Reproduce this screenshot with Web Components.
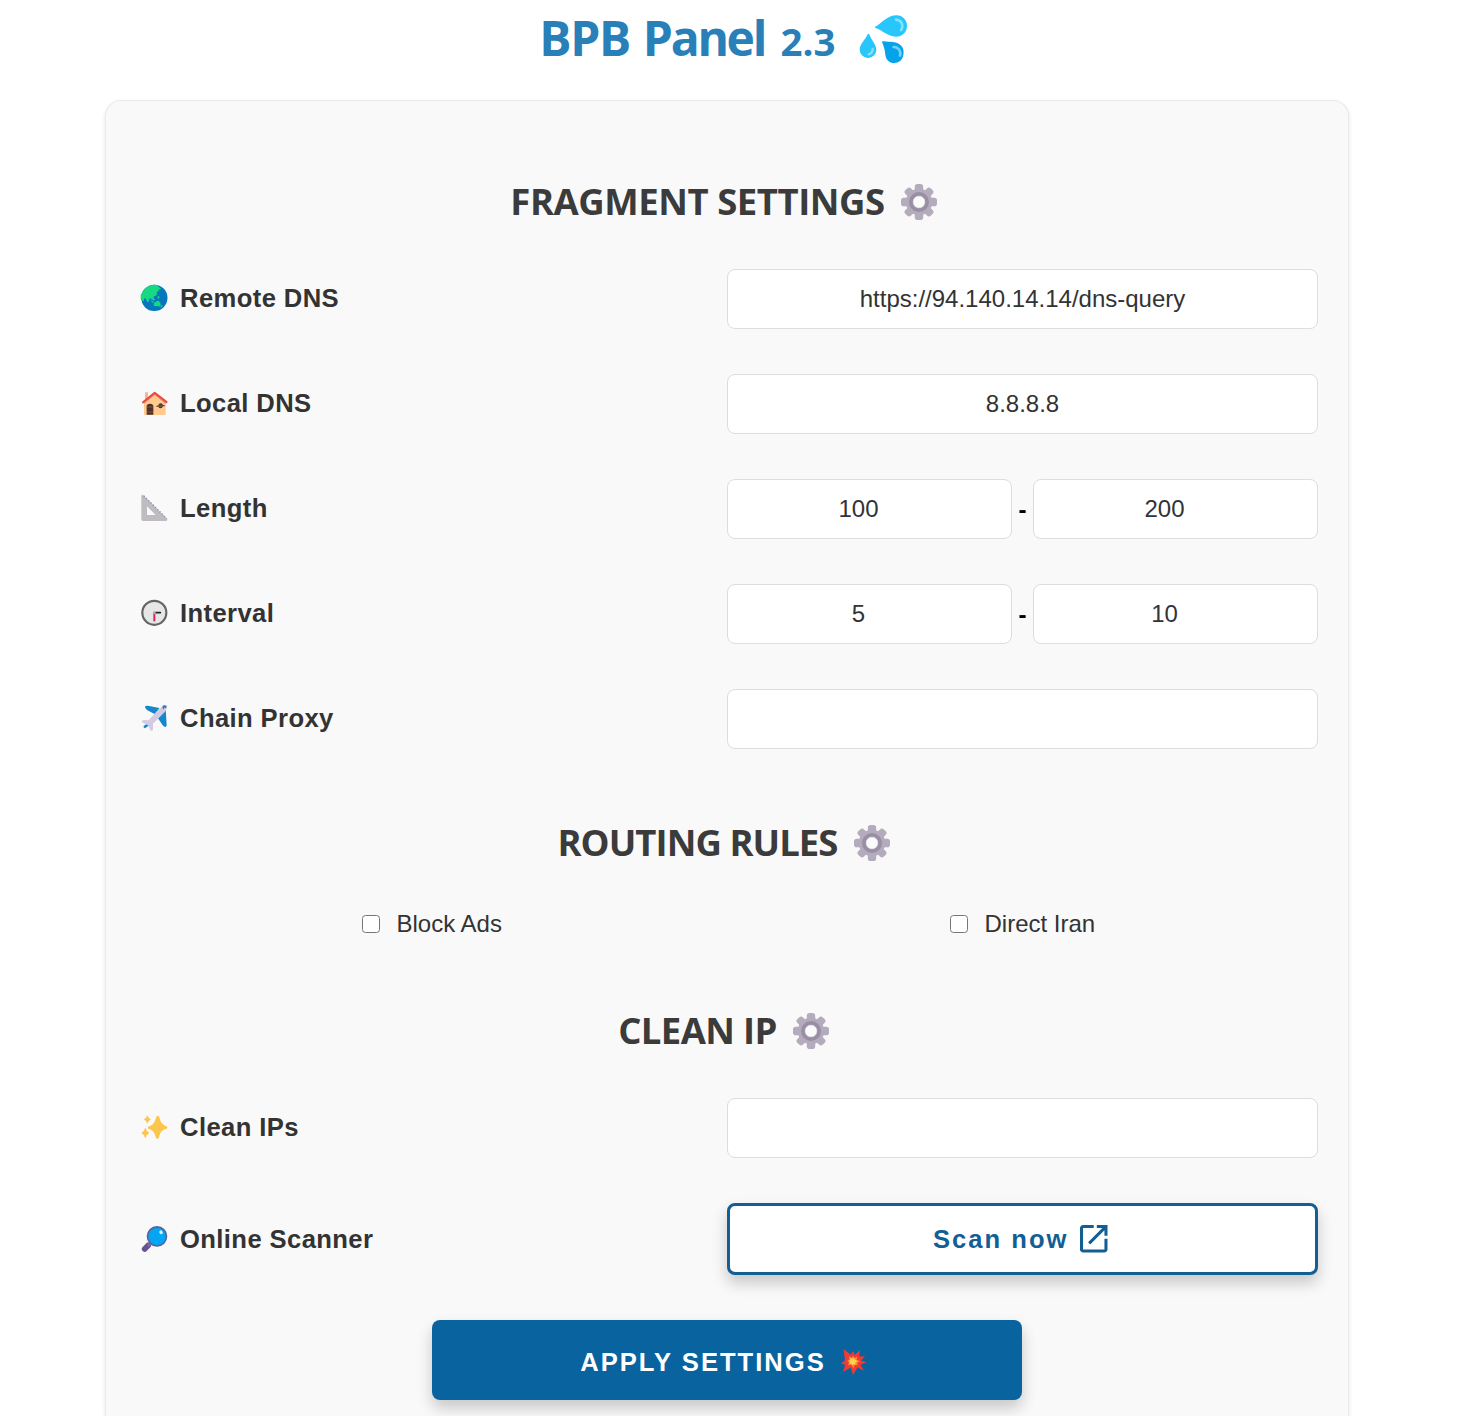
<!DOCTYPE html>
<html lang="en">
<head>
<meta charset="utf-8">
<title>BPB Panel</title>
<style>
html,body{margin:0;height:1416px;overflow:hidden;background:#fff}
body{font-family:"Liberation Sans",Arial,sans-serif;color:#333}
</style>
</head>
<body>
<bpb-panel></bpb-panel>
<script>
const ICONS = {
  drops: ['984 42 150 150', `<path fill="#27c7fc" d="M1033 80C1052 70 1068 46 1097 46a31 31 0 0 1 31 32c0 19-15 32-33 32-25 0-43-21-62-26q-4-2 0-4Z"/><path fill="none" stroke="#83e3ff" stroke-width="8" stroke-linecap="round" d="M1095 59c12 1 19 9 19 19q0 8-4 12"/><path fill="#27c7fc" d="M1010 103q2-4 5 0c5 16 21 31 21 46a25 25 0 0 1-50 0c0-16 17-30 24-46Z"/><path fill="none" stroke="#83e3ff" stroke-width="7" stroke-linecap="round" d="M1025 147c0 8-5 14-12 16"/><path fill="#06a2ea" d="M1053 126q0-3 5-2c19 3 36 0 49 10 11 8 12 20 10 31-2 15-14 24-27 24-16 0-25-10-27-25-1-13-4-24-10-38Z"/><path fill="none" stroke="#70d2fb" stroke-width="8" stroke-linecap="round" d="M1088 141c12 0 20 9 20 19q0 5-1 7"/>`],
  gear: ['0 0 36 36', `<g fill="#b4acbc"><circle cx="18" cy="18" r="13.2"/><rect x="13.8" y="0" width="8.4" height="36" rx="2.8"/><rect x="0" y="13.8" width="36" height="8.4" rx="2.8"/><g transform="rotate(45 18 18)"><rect x="14" y="0" width="8" height="36" rx="2.8"/><rect x="0" y="14" width="36" height="8" rx="2.8"/></g></g><circle cx="18" cy="18" r="8" fill="#fff" stroke="#998ea4" stroke-width="4"/><circle cx="18" cy="18" r="6" fill="#fbfbfb" stroke="#c9c3cf" stroke-width=".6"/>`],
  globe: ['30 42 84 84', `<circle cx="73" cy="83.500" r="39.500" fill="#0577bd"/><path fill="#16d981" d="M36 70C43 54 57 44 73 44q5 0 10 1l3 6 5 2 2 4-6 1-2 6-5 3 1 6-5 5-4 1-2 8-4 3-4-6-5 5-2 8-4-2-3-9-5-1-2 9-4-1-2-8-3 2q-1-8 1-16Z"/><path fill="#16d981" d="M72 98l6-2 3-4 5 1 5 5 1 7-4 5-6-2-8 1-3-5ZM67 86l4-3 4 6-3 4ZM82 81l4-4 3 5-4 4ZM62 91l7 3 3 5-6-2ZM94 105l4 3-4 5-3-2Z"/>`],
  house: ['30 357 84 84', `<path fill="#f2ba82" d="M45 367h9v15l-9 9Z"/><path fill="#ffca8c" d="M42 395l32-25 33 28v37H42Z"/><path fill="#d58d66" d="M41 402l33-27 35 28v-7L74 369l-33 28Z"/><path fill="none" stroke="#ef4545" stroke-width="6" stroke-linecap="round" stroke-linejoin="round" d="M39 397L74 368l36 28"/><path fill="#4d302c" d="M50 434v-25q0-8 10-8t10 8v25Z"/><path stroke="#956349" stroke-width="2" d="M50 411h20M51 426h18"/><path fill="#523532" d="M79 408l6-2q1-6 7-6t7 5l5 1v3h-5q-2 6-7 6t-7-5h-6Z"/><path stroke="#a9735a" stroke-width="2" d="M84 408h15"/>`],
  ruler: ['30 42 84 84', `<path fill="#bebcc1" fill-rule="evenodd" d="M34 48q0-5 6-3l70 70q4 4-1 8H38q-4 0-4-5ZM51 79v26h26Z"/><path fill="none" stroke="#8780a0" stroke-width="5" stroke-dasharray="2.500 7" d="M42 48l68 68"/>`],
  clock: ['30 357 84 84', `<circle cx="73" cy="398.500" r="36" fill="#e6e6e6" stroke="#646464" stroke-width="6.500"/><path stroke="#d02b5a" stroke-width="6" d="M73 398v26"/><path stroke="#222" stroke-width="5" stroke-linecap="round" d="M76 398h15"/><circle cx="73" cy="398" r="4.500" fill="#aaa"/>`],
  plane: ['30 672 84 84', `<path fill="#1687c8" d="M46 678l8-1 34 7-10 20-26-13q-9-8-6-13ZM92 698l15-10 3 48q-2 10-12 0L82 712ZM41 738l13-9 5 6-14 10q-6-1-4-7Z"/><path fill="#d5cae3" d="M112 675c0 11-5 20-13 26l-30 30v19q-5 5-9 0l-4-13-21-11q1-6 8-6l13 1 27-30c8-9 19-16 29-16Z"/><path fill="#2381b8" d="M97 680q2-5 8-4 6 2 4 8l-6-1-3 6Z"/>`],
  sparkles: ['30 39 84 84', `<g fill="#fcc64b"><path d="M83 47q4-1 6 8 4 18 17 22 8 3 6 7-1 2-8 4-12 4-16 20-2 10-6 9-4 0-6-9-4-16-16-20-7-2-7-5t7-5q13-5 17-22 2-9 6-9Z"/><path d="M52 47q2 0 4 7 6 2 6 4t-6 5q-2 7-4 7t-4-7q-6-3-6-5t6-4q2-7 4-7ZM46 84q3 0 4 9 7 3 7 6t-7 6q-2 9-4 9t-4-9q-7-3-7-6t7-6q2-9 4-9Z"/></g>`],
  search: ['30 375 84 84', `<path stroke="#675291" stroke-width="17" stroke-linecap="round" d="M44 447l11-11"/><path stroke="#7c6ca0" stroke-width="8" d="M54 437l9-8"/><circle cx="81" cy="409" r="28.500" fill="#04a6f4" stroke="#57639f" stroke-width="5"/><ellipse cx="93" cy="397" rx="5" ry="6" fill="#d5f0fc" transform="rotate(-35 93 397)"/>`],
  open: ['120 -840 720 720', `<path fill="currentColor" d="M200-120q-33 0-56.500-23.500T120-200v-560q0-33 23.500-56.500T200-840h280v80H200v560h560v-280h80v280q0 33-23.500 56.500T760-120H200Zm188-212-56-56 372-372H560v-80h280v280h-80v-144L388-332Z"/>`],
  boom: ['0 0 26 28', `<path fill="#f03b35" d="M2.500 1l7 5.500L12.300 3l1.500 4L19 2l-1 6.500 6-.3-4 4.200 5.500 1.800-6 2.500 3.500 6-6.500-3.200L12 27l-2.200-7.500L2 24l2.200-7.200L0 15.500l4-3.300Z"/><path fill="#ff8a36" d="M8 8l2.400 1.800 1.800-1.800 1.300 2.200 2.700-1.600-.5 3.100 3.300 1.500-3 1.700.8 2.600-2.900-.9-1.700 4-1.500-4-3.600.7.900-2.900-1.900-1.400 2.500-1.700Z"/><path fill="#ffd34f" d="M9 9.800l2.500 1.200L13 9l.8 2.600 2.700 1.600-2.200 1.400.4 2.200-2.400-.9-1.300 1.700-.8-2.100-1.800.2.500-1.800-.9-1.300 1.600-.6Z"/>`]
};
const define = (name, html, setup) => customElements.define(name, class extends HTMLElement {
  connectedCallback() {
    if (this.shadowRoot) return;
    this.attachShadow({mode: 'open'}).innerHTML = html;
    if (setup) setup(this, this.shadowRoot);
  }
});

define('bpb-icon', `<style>:host{display:block;flex:none;width:28px;height:28px}svg{display:block;width:100%;height:100%;overflow:visible}</style><svg fill="none" aria-hidden="true"></svg>`, (el, root) => {
  const [box, art] = ICONS[el.getAttribute('name')];
  const svg = root.querySelector('svg');
  svg.setAttribute('viewBox', box);
  svg.innerHTML = art;
});

define('bpb-title', `<style>
:host{display:flex;justify-content:center;align-items:center;height:78px;margin-right:6px;box-sizing:border-box;font-family:"Open Sans","Noto Sans",sans-serif;font-weight:700;color:#2980b9}
h1{margin:0;font-size:48px;line-height:78px;white-space:pre}
span{letter-spacing:-1.400px;word-spacing:2px}
span i{font-style:normal;letter-spacing:-2.300px}
small{font-size:38.4px;letter-spacing:.1px;margin-left:3px}
bpb-icon{width:50px;height:50px;margin-left:23px}
</style><h1><span>BPB <i>Panel</i></span> <small>2.3</small></h1><bpb-icon name="drops"></bpb-icon>`);

define('bpb-heading', `<style>
:host{display:flex;justify-content:center;align-items:center;height:48px;padding-right:7px;font-family:"Open Sans","Noto Sans",sans-serif}
h2{margin:0 0 2px;font-size:36.500px;line-height:46px;font-weight:700;color:#3b3b3b;white-space:nowrap;letter-spacing:var(--ls,0)}
bpb-icon{width:36px;height:36px;margin-left:16px}
</style><h2><slot></slot></h2><bpb-icon name="gear"></bpb-icon>`);

define('bpb-row', `<style>
:host{display:grid;grid-template-columns:1fr 1fr;align-items:center;margin-bottom:45px}
.label{display:flex;align-items:center;gap:12px;padding:0 0 2px 4px;font-size:25.600px;font-weight:700;letter-spacing:.4px;color:#333;line-height:30px}
:host([level]) .label{padding-bottom:0}
.field{display:flex;align-items:center}
</style><div class="label"><span></span></div><div class="field"><slot></slot></div>`, (el, root) => {
  root.querySelector('span').textContent = el.getAttribute('label');
  const icon = document.createElement('bpb-icon');
  icon.setAttribute('name', el.getAttribute('icon'));
  root.querySelector('.label').prepend(icon);
});

define('bpb-input', `<style>
:host{display:flex;flex:1;justify-content:center;align-items:center;box-sizing:border-box;height:60px;border:1px solid #ddd;border-radius:8px;background:#fff;font-size:24px;color:#333;min-width:0}
</style><slot></slot>`);

define('bpb-range', `<style>
:host{display:flex;flex:1;align-items:center}
bpb-input{padding-right:22px}
b{width:21px;padding-top:2px;text-align:center;color:#000;font-size:24px}
</style><bpb-input><slot name="from"></slot></bpb-input><b>-</b><bpb-input><slot name="to"></slot></bpb-input>`);

define('bpb-check', `<style>
:host{display:flex;align-items:center;gap:16.500px;font-size:24px;line-height:28px;color:#333}
i{box-sizing:border-box;width:18px;height:18px;border:1.500px solid #767676;border-radius:3.500px;background:#fff}
</style><i></i><span><slot></slot></span>`);

define('bpb-button', `<style>
:host{display:flex;flex:1;justify-content:center;align-items:center;box-sizing:border-box;height:72px;padding-right:4px;border:3px solid #135f95;border-radius:8px;background:#fff;color:#135f95;font-size:25.600px;font-weight:700;letter-spacing:2px;box-shadow:0 8px 15px rgba(0,0,0,.2)}
:host([primary]){flex:none;width:590px;height:80px;padding:4px 7px 0 0;border:0;background:#09639f;color:#fff}
</style><slot></slot>`);

define('bpb-panel', `<style>
:host{display:block;width:1454px}
main{display:block;box-sizing:border-box;width:1244px;height:1316px;margin:22px auto 0;padding:77px 30px 0;border:1px solid #eaeaea;border-bottom:0;border-radius:16px 16px 0 0;background:#f9f9f9;box-shadow:0 2px 4px rgba(0,0,0,.1)}
.first{margin-bottom:43px;--ls:-.45px}
.routing{margin:70px 0 43px;--ls:-.95px}
.checks{display:grid;grid-template-columns:1fr 1fr;height:28px;margin-bottom:69px}
.checks bpb-check{justify-self:start;margin-left:226px}
.checks bpb-check+bpb-check{margin-left:223px}
.clean{margin-bottom:43px;--ls:-.65px}
.actions{display:flex;justify-content:center}
.open{width:27.500px;height:27.500px;margin-left:12px}
.boom{width:26px;height:28px;margin-left:15px}
</style>
<bpb-title></bpb-title>
<main>
<bpb-heading class="first">FRAGMENT SETTINGS</bpb-heading>
<bpb-row icon="globe" label="Remote DNS"><bpb-input>https://94.140.14.14/dns-query</bpb-input></bpb-row>
<bpb-row icon="house" label="Local DNS"><bpb-input>8.8.8.8</bpb-input></bpb-row>
<bpb-row icon="ruler" label="Length"><bpb-range><span slot="from">100</span><span slot="to">200</span></bpb-range></bpb-row>
<bpb-row icon="clock" label="Interval"><bpb-range><span slot="from">5</span><span slot="to">10</span></bpb-range></bpb-row>
<bpb-row icon="plane" label="Chain Proxy"><bpb-input></bpb-input></bpb-row>
<bpb-heading class="routing">ROUTING RULES</bpb-heading>
<div class="checks"><bpb-check>Block Ads</bpb-check><bpb-check>Direct Iran</bpb-check></div>
<bpb-heading class="clean">CLEAN IP</bpb-heading>
<bpb-row icon="sparkles" label="Clean IPs"><bpb-input></bpb-input></bpb-row>
<bpb-row level icon="search" label="Online Scanner"><bpb-button><span>Scan now</span><bpb-icon class="open" name="open"></bpb-icon></bpb-button></bpb-row>
<div class="actions"><bpb-button primary><span>APPLY SETTINGS</span><bpb-icon class="boom" name="boom"></bpb-icon></bpb-button></div>
</main>`);
</script>
</body>
</html>
